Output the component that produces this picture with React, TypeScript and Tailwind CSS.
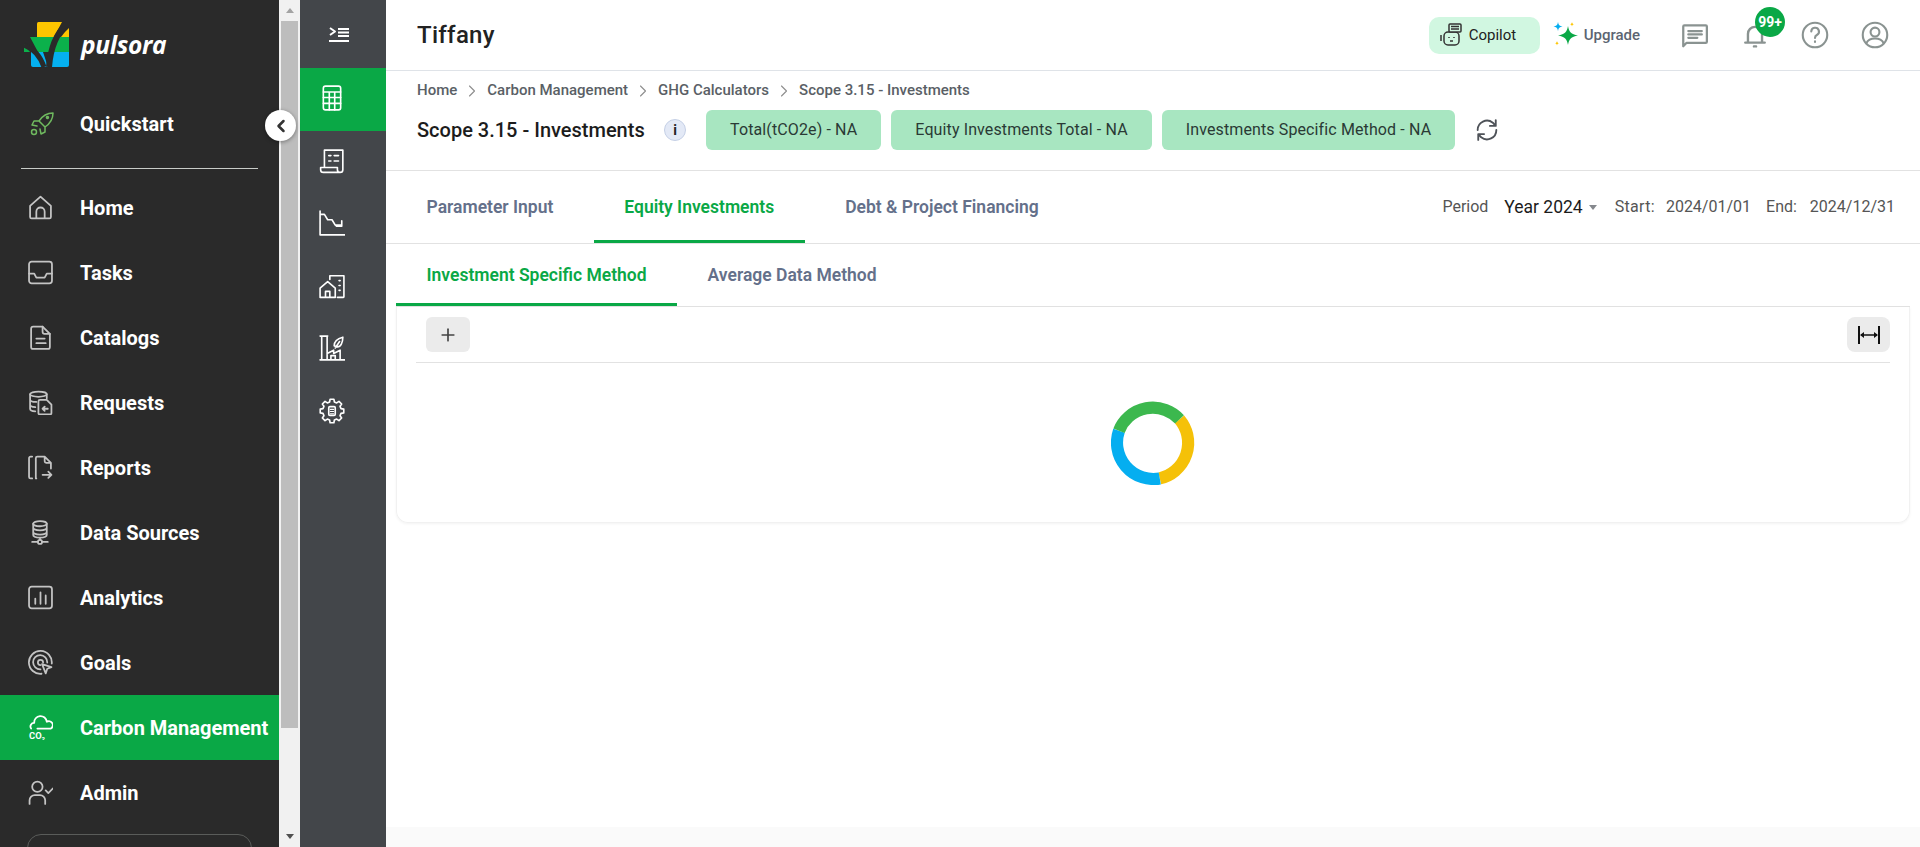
import { ChevronLeft, ChevronRight, Plus } from "lucide-react";
import type { ReactNode } from "react";

function Ico({ size = 24, sw = 1.5, children }: { size?: number; sw?: number; children: ReactNode }) {
  return (
    <svg width={size} height={size} viewBox="0 0 24 24" fill="none" stroke="currentColor" strokeWidth={sw} strokeLinecap="round" strokeLinejoin="round">
      {children}
    </svg>
  );
}

// eight-tooth gear outline for the settings entry of the rail
function gearPath() {
  const pts: string[] = [];
  for (let i = 0; i < 8; i++) {
    const a = (i * Math.PI) / 4;
    [[-0.26, 8.6], [-0.16, 11], [0.16, 11], [0.26, 8.6]].forEach(([d, r]) => {
      const x = 12 + r * Math.sin(a + d);
      const y = 12 - r * Math.cos(a + d);
      pts.push(`${x.toFixed(2)} ${y.toFixed(2)}`);
    });
  }
  return `M${pts.join("L")}Z`;
}

const navItems: { label: string; active?: boolean; icon: ReactNode }[] = [
  {
    label: "Home",
    icon: <path d="M2 21V10.5L12 1.5l10 9V21a1.5 1.5 0 0 1-1.5 1.5h-17A1.5 1.5 0 0 1 2 21zM8 22v-6a4 4 0 0 1 8 0v6" />,
  },
  {
    label: "Tasks",
    icon: (
      <>
        <rect x="1" y="1.5" width="22" height="21" rx="2.5" />
        <path d="M1 13h5l2 4h8l2-4h5" />
      </>
    ),
  },
  {
    label: "Catalogs",
    icon: (
      <>
        <path d="M3 3.5a2 2 0 0 1 2-2h9l7 7v12.5a2 2 0 0 1-2 2H5a2 2 0 0 1-2-2z" />
        <path d="M14 1.5v5a2 2 0 0 0 2 2h5M8 13h8M8 17.5h9" />
      </>
    ),
  },
  {
    label: "Requests",
    icon: (
      <>
        <ellipse cx="10" cy="4" rx="8" ry="2.5" />
        <path d="M2 4v14c0 1.5 2.5 2.5 5 2.5M18 4v4M2 9c0 1.5 2.5 2.5 6 2.5M2 14c0 1.5 2.5 2.5 5 2.5" />
        <path d="M10 11a1.5 1.5 0 0 1 1.5-1.5H18l4.5 4.5v8a1.5 1.5 0 0 1-1.5 1.5h-9.5A1.5 1.5 0 0 1 10 22zM19 18h-5M16 16l-2 2 2 2" />
      </>
    ),
  },
  {
    label: "Reports",
    icon: (
      <>
        <path d="M4 1.5H2.5A1.5 1.5 0 0 0 1 3v18a1.5 1.5 0 0 0 1.5 1.5H4" />
        <path d="M8 22.5h-.5V3A1.5 1.5 0 0 1 9 1.5h7l6 6V13M16 1.5V6a1.5 1.5 0 0 0 1.5 1.5H22M14 19h8.5M19.5 16l3 3-3 3" />
      </>
    ),
  },
  {
    label: "Data Sources",
    icon: (
      <>
        <ellipse cx="11.5" cy="3.5" rx="6.5" ry="2.5" />
        <path d="M5 3.5v11c0 1.4 2.9 2.5 6.5 2.5s6.5-1.1 6.5-2.5v-11M5 7.5c0 1.4 2.9 2.5 6.5 2.5S18 8.9 18 7.5M5 11.5c0 1.4 2.9 2.5 6.5 2.5s6.5-1.1 6.5-2.5M11.5 17v2" />
        <circle cx="11.5" cy="21" r="2" />
        <path d="M4 21h5.5M13.5 21H19" />
      </>
    ),
  },
  {
    label: "Analytics",
    icon: (
      <>
        <rect x="1" y="1.5" width="22" height="21" rx="2.5" />
        <path d="M7 18v-5M12 18V7M17 18v-8" />
      </>
    ),
  },
  {
    label: "Goals",
    icon: (
      <>
        <path d="M13 22.8A11 11 0 1 1 22.8 13" />
        <path d="M12 18.5A6.8 6.8 0 1 1 18.5 12" />
        <path d="M12 14.5a2.5 2.5 0 1 1 2.5-2.5" />
        <path d="M13.5 13.5l9 3-4 1.5-1.5 4.5z" />
      </>
    ),
  },
  {
    label: "Carbon Management",
    active: true,
    icon: (
      <>
        <path d="M3 13a3.5 3.5 0 0 1 3-5.5A6 6 0 0 1 18 6.5a3.5 3.5 0 0 1 4 6.5H9" />
        <text x="1" y="23" fontSize="9" fontWeight="700" fill="currentColor" stroke="none" fontFamily="Roboto, sans-serif">CO₂</text>
      </>
    ),
  },
  {
    label: "Admin",
    icon: (
      <>
        <circle cx="9" cy="6.5" r="5" />
        <path d="M1.5 23v-3.5a5 5 0 0 1 5-5h5a5 5 0 0 1 5 5V23M17 10l2.5 2.5L24 8" />
      </>
    ),
  },
];

const railItems: { active?: boolean; icon: ReactNode }[] = [
  {
    active: true,
    icon: (
      <>
        <rect x="4" y="1" width="16" height="22" rx="2" />
        <path d="M4 6.5h16M4 11.5h16M4 17h16M9.5 6.5V23M14.5 6.5V23" />
      </>
    ),
  },
  {
    icon: (
      <>
        <path d="M5 18V2h17v18a2.5 2.5 0 0 1-2.5 2.5H4A2.5 2.5 0 0 1 1.5 20v-2H17v2a2.5 2.5 0 0 0 2.5 2.5" />
        <path d="M9 7h2M14 7h4M9 12h2M14 12h4" />
      </>
    ),
  },
  {
    icon: <path d="M1 1v22h23M1 4h4l3 5h4l3 5h6M21 10v5h-5" />,
  },
  {
    icon: <path d="M1 22V14l7-6 7 6v8.5H1zM6 22.5V17h4v5.5M10 6V2.5h13V22a.5.5 0 0 1-.5.5H17M18.5 7h1M18.5 11.5h1M18.5 16h1" />,
  },
  {
    icon: (
      <>
        <path d="M1 23h23M2.5 23V1h5v22M1 1h7M7.5 17l6-3v3l6-3v9M11 23v-4h4v4" />
        <path d="M14 10c0-5 4-7 8-8 0 5-2 9-5 9-1 0-2-.5-3-1zM15 12l4-6" />
      </>
    ),
  },
  {
    icon: (
      <>
        <path d={gearPath()} />
        <rect x="9" y="8" width="6" height="8" rx="1" />
        <path d="M10.5 10.5h3M10.5 12.5h3M10.5 14.5h3" strokeWidth="1" />
      </>
    ),
  },
];

function Logo() {
  return (
    <svg width="46" height="46" viewBox="0 0 46 46">
      <path d="M13 1.5A1.5 1.5 0 0 1 14.5 0H38l-8 15H13z" fill="#fdc500" />
      <path d="M41 10l4-4v9h-8z" fill="#fdc500" />
      <path d="M6 15h39v15H14z" fill="#0bb14b" />
      <path d="M0 22l6 8H0z" fill="#0bb14b" />
      <path d="M7 30h12l5 15H9a2 2 0 0 1-2-2z" fill="#05b0f0" />
      <path d="M27 30h18v13a2 2 0 0 1-2 2H27z" fill="#05b0f0" />
      <path d="M45 0C35 8 27 20 25 45" fill="none" stroke="#2a2a2a" strokeWidth="6" />
      <path d="M0 23c8 3 16 10 20 22" fill="none" stroke="#2a2a2a" strokeWidth="5" />
    </svg>
  );
}

function Sidebar() {
  return (
    <aside className="w-[279px] shrink-0 h-full bg-[#2a2a2a] flex flex-col overflow-hidden">
      <div className="h-[91px] shrink-0 pl-[24px] pt-[22px] flex items-start gap-[11px]">
        <Logo />
        <span className="text-white italic font-bold text-[24.5px] leading-[46px] tracking-[-0.3px] font-['Open_Sans',sans-serif]">pulsora</span>
      </div>
      <div className="h-[65px] flex items-center pl-[30px] shrink-0">
        <span className="w-[50px] text-[#6fb95f]">
          <Ico>
            <path d="M9 9c4-6 8-8 14-8 0 6-2 10-8 14l-6-6zM9 9H4l-2 4 5 1M15 15v5l-4 2-1-5M17.5 6.5a1 1 0 1 0-.1 0" />
            <circle cx="4" cy="20" r="2.5" />
          </Ico>
        </span>
        <span className="text-white font-bold text-[20px]">Quickstart</span>
      </div>
      <div className="mx-[21px] border-t border-[#c8ccc8] mt-[12px] mb-[6px]" />
      {navItems.map((item) => (
        <div
          key={item.label}
          className={`h-[65px] shrink-0 flex items-center pl-[28px] ${item.active ? "bg-[#0aa846]" : ""}`}
        >
          <span className={`w-[52px] ${item.active ? "text-white" : "text-[#c4c4c4]"}`}>
            <Ico size={25} sw={1.7}>{item.icon}</Ico>
          </span>
          <span className="text-white font-bold text-[20px] whitespace-nowrap">{item.label}</span>
        </div>
      ))}
      <div className="mx-[27px] mt-[9px] h-[60px] shrink-0 rounded-[14px] border border-[#5a5c5a]" />
    </aside>
  );
}

function Scrollbar() {
  return (
    <div className="w-[21px] shrink-0 h-full bg-[#f1f1f1] flex flex-col items-center">
      <div className="h-[21px] w-full flex items-center justify-center">
        <span className="w-0 h-0 border-x-[4.5px] border-x-transparent border-b-[5px] border-b-[#a3a3a3]" />
      </div>
      <div className="w-[17px] h-[707px] bg-[#bdbdbd]" />
      <div className="mt-auto h-[21px] w-full flex items-center justify-center">
        <span className="w-0 h-0 border-x-[4.5px] border-x-transparent border-t-[5px] border-t-[#505050]" />
      </div>
    </div>
  );
}

function Rail() {
  return (
    <nav className="w-[86px] shrink-0 h-full bg-[#43464a] text-white flex flex-col">
      <div className="h-[68px] flex items-center justify-center shrink-0 pr-[8px] pt-[5px]">
        <Ico size={24} sw={2}>
          <path d="M3 3l5 3.5-5 3.5M11 4h11M11 7.5h11M11 11h11M2 16h20" strokeLinecap="butt" />
        </Ico>
      </div>
      {railItems.map((item, i) => (
        <div key={i} className={`h-[62.5px] shrink-0 flex items-center justify-center pr-[23px] ${item.active ? "bg-[#0aa846]" : ""}`}>
          <span className="-mt-[2px]">
            <Ico size={26}>{item.icon}</Ico>
          </span>
        </div>
      ))}
    </nav>
  );
}

function TopBar() {
  return (
    <header className="h-[71px] shrink-0 border-b border-[#dfe3e8] flex items-center pl-[31px]">
      <h1 className="text-[24px] font-medium text-[#222] tracking-[0.3px]">Tiffany</h1>
      <div className="ml-auto flex items-center">
        <div className="w-[111px] h-[37px] rounded-[10px] bg-[#d1f7e1] flex items-center pl-[11px] gap-[7px] text-[15px] text-[#222]">
          <svg width="22" height="24" viewBox="0 0 22 24" fill="none" stroke="#333" strokeWidth="1.5">
            <rect x="4" y="9" width="15" height="13" rx="4" />
            <rect x="9" y="1" width="12" height="8" rx="1" fill="#d1f7e1" />
            <path d="M11 3.5h8M11 6h8M1 12v6M9 14v1M14 14v1M10 18h3" />
          </svg>
          Copilot
        </div>
        <div className="ml-[13px] w-[26px] h-[26px]">
          <svg width="26" height="26" viewBox="0 0 26 26">
            <path d="M15 4c1 6 3 8 10 9.5-7 1.5-9 3.5-10 9.5-1-6-3-8-10-9.5C12 12 14 10 15 4z" fill="#0aa846" />
            <path d="M5 0c.5 3 1.5 4 4.5 4.5C6.5 5 5.5 6 5 9c-.5-3-1.5-4-4.5-4.5C3.5 4 4.5 3 5 0z" fill="#05aef0" />
            <path d="M19 0c.3 1.5.7 2 2 2.2-1.3.3-1.7.8-2 2.3-.3-1.5-.7-2-2-2.3 1.3-.2 1.7-.7 2-2.2zM4 19c.3 1.5.7 2 2 2.2-1.3.3-1.7.8-2 2.3-.3-1.5-.7-2-2-2.3 1.3-.2 1.7-.7 2-2.2z" fill="#fdc500" />
          </svg>
        </div>
        <span className="ml-[5px] text-[15px] text-[#5b6472] font-medium">Upgrade</span>
        <div className="ml-[41px] text-[#8a9391]">
          <Ico size={27} sw={2}>
            <path d="M2 21.5V4a1 1 0 0 1 1-1h19a1 1 0 0 1 1 1v13.5a1 1 0 0 1-1 1H5z" />
            <path d="M6.5 8h12M6.5 11h12M6.5 14h8" />
          </Ico>
        </div>
        <div className="ml-[34px] relative text-[#8a9391]">
          <Ico size={26} sw={2.2}>
            <path d="M3 19h18M5.5 19v-8a6.5 6.5 0 0 1 13 0v8M11 22.5h2" />
          </Ico>
          <span className="absolute -top-[15px] left-[13px] w-[30px] h-[30px] rounded-full bg-[#0aa846] text-white text-[14px] font-bold flex items-center justify-center">99+</span>
        </div>
        <div className="ml-[33px] text-[#8a9391]">
          <Ico size={28} sw={1.8}>
            <circle cx="12" cy="12" r="10.5" />
            <path d="M8.8 9a3.3 3.3 0 1 1 4.8 3c-1.1.6-1.6 1.3-1.6 2.5M12 17.5v.5" />
          </Ico>
        </div>
        <div className="ml-[32px] mr-[31px] text-[#8a9391]">
          <Ico size={28} sw={1.8}>
            <circle cx="12" cy="12" r="10.5" />
            <circle cx="12" cy="9.5" r="3.8" />
            <path d="M4.5 19c1.5-3 4-4 7.5-4s6 1 7.5 4" />
          </Ico>
        </div>
      </div>
    </header>
  );
}

function PageHead() {
  const crumbs = ["Home", "Carbon Management", "GHG Calculators", "Scope 3.15 - Investments"];
  const chips = ["Total(tCO2e) - NA", "Equity Investments Total - NA", "Investments Specific Method - NA"];
  return (
    <section className="h-[100px] shrink-0 border-b border-[#e2e2e2] pl-[31px]">
      <div className="h-[38px] flex items-center text-[15px] font-medium text-[#5a5f66] pt-[1px]">
        {crumbs.map((c, i) => (
          <span key={c} className="flex items-center">
            {i > 0 && <ChevronRight size={20} strokeWidth={1.3} className="mx-[5px] text-[#8d8d8d]" />}
            {c}
          </span>
        ))}
      </div>
      <div className="flex items-center h-[40px] mt-[1px]">
        <span className="w-[226px] text-[20px] font-medium text-[#1c1c1c] whitespace-nowrap">Scope 3.15 - Investments</span>
        <span className="ml-[21px] w-[22px] h-[22px] rounded-full bg-[#e3e9f6] border border-[#c5d0e6] flex items-center justify-center text-[14px] font-bold text-[#222]">i</span>
        <div className="ml-[20px] flex gap-[10px]">
          {chips.map((c) => (
            <span key={c} className="h-[40px] px-[24px] rounded-[6px] bg-[#a8e6c1] flex items-center text-[16px] tracking-[0.12px] text-[#2a3a35] whitespace-nowrap">
              {c}
            </span>
          ))}
        </div>
        <span className="ml-[18px] text-[#4e5258]">
          <Ico size={28} sw={1.6}>
            <path d="M4 12a8 8 0 0 1 13-6.3L19 8M19.5 3.5V8.5H14.5M20 12a8 8 0 0 1-13 6.3L5 16M4.5 20.5V15.5H9.5" />
          </Ico>
        </span>
      </div>
    </section>
  );
}

function Tab({ label, active }: { label: string; active?: boolean }) {
  return (
    <div
      className={`px-[30.5px] pt-[4px] flex items-center border-b-[3px] text-[17.5px] font-semibold whitespace-nowrap ${
        active ? "text-[#0aa846] border-[#0aa846]" : "text-[#64708a] border-transparent"
      }`}
    >
      {label}
    </div>
  );
}

function TabsRow() {
  return (
    <div className="h-[73px] shrink-0 border-b border-[#e2e2e2] flex items-stretch pl-[10px]">
      <div className="flex gap-[10px]">
        <Tab label="Parameter Input" />
        <Tab label="Equity Investments" active />
        <Tab label="Debt & Project Financing" />
      </div>
      <div className="ml-auto flex items-center text-[16px] text-[#555] pr-[25px]">
        <span>Period</span>
        <span className="ml-[16px] text-[17.5px] text-[#1c1c1c]">Year 2024</span>
        <span className="ml-[6px] w-0 h-0 border-x-[4.5px] border-x-transparent border-t-[5px] border-t-[#85888d]" />
        <span className="ml-[18px] tracking-[0.3px]">Start:</span>
        <span className="ml-[11px]">2024/01/01</span>
        <span className="ml-[15px]">End:</span>
        <span className="ml-[13px]">2024/12/31</span>
      </div>
    </div>
  );
}

function Spinner() {
  return (
    <svg width="85" height="85" viewBox="0 0 84 84" fill="none" strokeWidth="12">
      <path d="M67.7 19.1A36 36 0 0 1 48.2 77.5" stroke="#f5c108" />
      <path d="M48.2 77.5A36 36 0 0 1 7.9 30.3" stroke="#05aef0" />
      <path d="M7.9 30.3A36 36 0 0 1 67.7 19.1" stroke="#3cb84e" />
    </svg>
  );
}

function Card() {
  return (
    <div className="h-[216px] rounded-b-[12px] border border-t-0 border-[#f1f1f1] shadow-[0_1px_3px_rgba(0,0,0,0.05)] mr-[10px] ml-[10px] px-[19px]">
      <div className="h-[56px] border-b border-[#e2e2e2] flex items-start justify-between pt-[10px] pl-[10px]">
        <button className="w-[44px] h-[35px] rounded-[6px] bg-[#ebebeb] flex items-center justify-center text-[#444]">
          <Plus size={20} strokeWidth={2} />
        </button>
        <button className="w-[43px] h-[35px] rounded-[8px] bg-[#ebebeb] flex items-center justify-center text-[#111]">
          <svg width="24" height="20" viewBox="0 0 24 20" fill="none" stroke="currentColor" strokeWidth="2">
            <path d="M2 1v18M22 1v18" />
            <path d="M4 10h16" strokeWidth="1.5" />
            <path d="M3 10l4-3v6zM21 10l-4-3v6z" fill="currentColor" stroke="none" />
          </svg>
        </button>
      </div>
      <div className="flex justify-center pt-[37px]">
        <Spinner />
      </div>
    </div>
  );
}

export default function App() {
  return (
    <div className="h-screen w-full flex overflow-hidden bg-white font-['Roboto',sans-serif] relative">
      <Sidebar />
      <Scrollbar />
      <Rail />
      <main className="flex-1 min-w-0 h-full flex flex-col">
        <TopBar />
        <PageHead />
        <TabsRow />
        <div className="h-[63px] shrink-0 flex items-stretch pl-[10px] pr-[10px]">
          <div className="flex flex-1 border-b border-[#e2e2e2]">
            <Tab label="Investment Specific Method" active />
            <Tab label="Average Data Method" />
          </div>
        </div>
        <Card />
        <div className="mt-auto h-[20px] bg-[#fafafa]" />
      </main>
      <button className="absolute left-[265px] top-[110px] w-[31px] h-[31px] rounded-full bg-white shadow-[0_1px_4px_rgba(0,0,0,0.4)] flex items-center justify-center text-[#333]">
        <ChevronLeft size={20} strokeWidth={3} />
      </button>
    </div>
  );
}
